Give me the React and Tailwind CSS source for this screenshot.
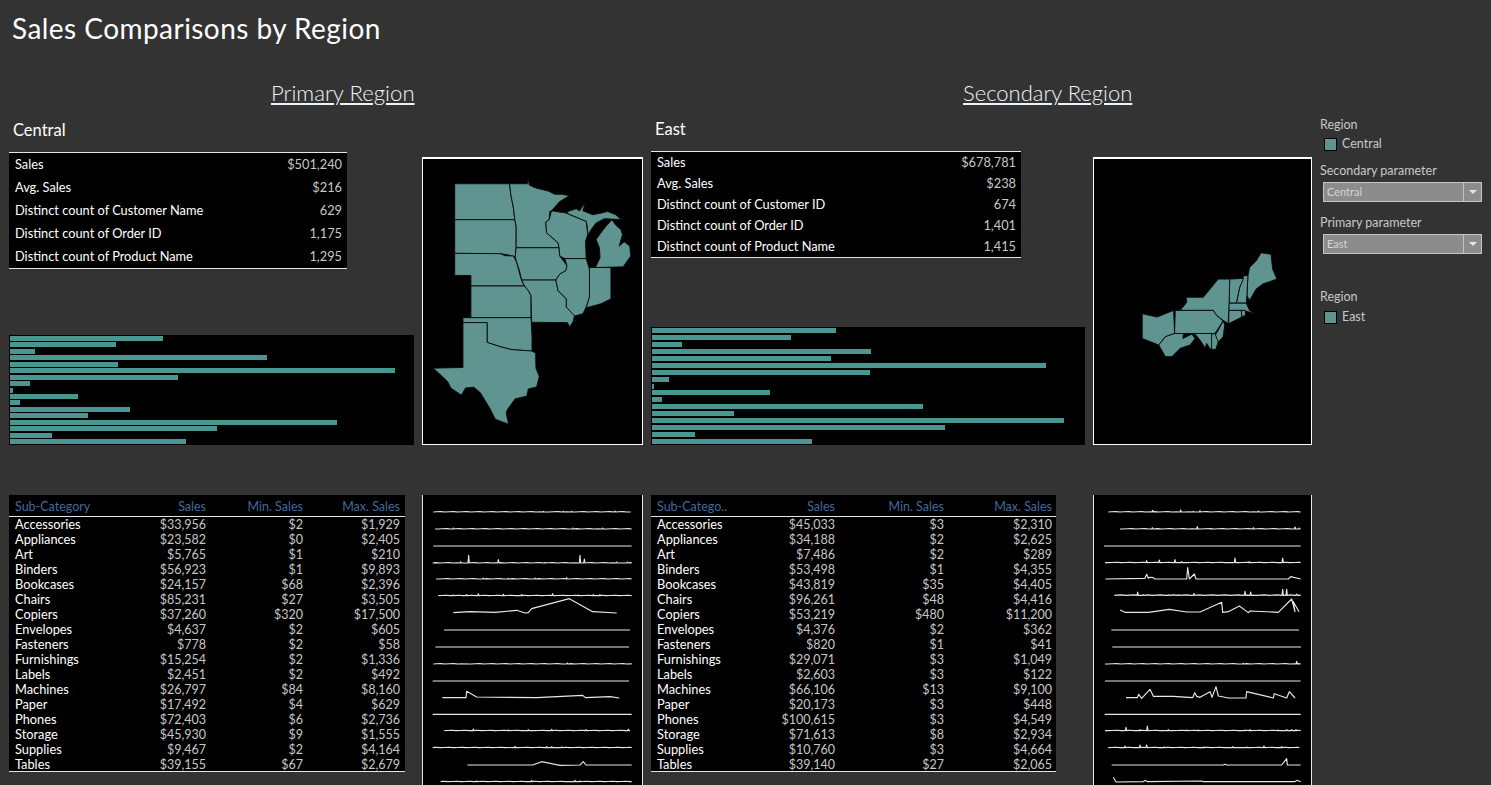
const FONT = "font-['Lato','Liberation_Sans',sans-serif]";

const centralMap = [
  "102,96 268,96 272,130 280,170 284,205 102,205",
  "102,205 284,205 288,225 288,290 285,318 265,312 240,308 102,307",
  "102,307 240,308 255,314 280,315 290,335 300,375 305,390 313,406 151,406 151,374 102,374",
  "151,406 313,406 325,420 333,435 333,502 151,502",
  "268,96 322,96 324,82 328,100 345,108 360,112 385,118 405,128 425,128 450,132 420,150 395,178 390,180 388,205 378,212 380,245 400,262 415,275 418,290 288,290 288,225 284,205 280,170 272,130",
  "288,290 418,290 420,315 442,345 438,360 420,370 408,388 305,388 298,360 290,335 285,318",
  "305,388 408,388 415,420 440,445 440,470 465,495 460,515 450,530 443,517 335,516 333,435 325,420 313,406",
  "395,178 440,185 500,210 505,250 498,270 500,323 435,323 420,315 418,290 415,275 400,262 380,245 378,212 388,205",
  "435,323 500,323 510,355 510,440 500,470 490,490 465,497 440,470 440,445 415,420 408,388 420,370 438,360 442,345",
  "510,350 575,350 575,445 545,460 500,472 510,440",
  "440,185 450,178 470,172 480,178 497,153 490,178 520,190 545,185 565,180 590,190 600,200 608,205 575,203 555,202 530,215 515,235 505,252 503,225 500,210",
  "578,205 590,222 605,235 610,250 600,285 615,272 632,285 635,315 612,348 528,350 542,320 540,290 530,265 548,240 560,225",
  "127,502 333,502 336,560 336,603 290,600 270,598 240,590 200,577 200,517 127,517",
  "127,517 200,517 200,577 240,590 270,598 290,600 336,603 347,610 348,655 358,680 350,712 325,718 320,740 285,748 262,780 258,790 265,825 225,810 210,780 180,730 160,713 135,715 122,737 90,715 80,695 37,655 127,653",
];

const eastMap = [
  "475,495 480,470 500,450 515,425 545,430 550,475 563,505 520,520 500,535 480,570 472,555",
  "475,495 472,555 470,578 440,578 450,530 462,495",
  "420,505 462,503 450,530 440,578 418,578 418,540",
  "417,578 470,578 480,600 495,610 462,600 417,600",
  "417,600 455,600 457,620 417,640",
  "455,600 467,600 468,615 457,620",
  "420,505 418,578 417,600 415,640 400,630 380,615 370,600 270,600 290,575 288,560 340,560 385,505",
  "255,600 370,600 380,615 400,632 385,655 375,670 253,670",
  "400,632 405,645 400,680 385,695 370,685 385,660",
  "155,610 200,620 250,600 253,670 225,680 205,705 155,685",
  "205,705 225,680 253,670 280,670 278,685 305,672 315,685 300,705 270,715 245,740 225,740",
  "278,670 375,670 375,700 362,718 350,700 345,715 340,705 330,690 315,672",
  "365,672 375,670 385,695 378,718 365,718",
];

const centralBars = [153, 106, 25, 257, 108, 385, 168, 20, 3, 68, 10, 120, 78, 327, 207, 42, 176];
const eastBars = [184, 139, 30, 219, 179, 394, 218, 17, 2, 118, 10, 271, 82, 412, 293, 43, 160];

const centralKpi = [
  ["Sales", "$501,240"],
  ["Avg. Sales", "$216"],
  ["Distinct count of Customer Name", "629"],
  ["Distinct count of Order ID", "1,175"],
  ["Distinct count of Product Name", "1,295"],
];
const eastKpi = [
  ["Sales", "$678,781"],
  ["Avg. Sales", "$238"],
  ["Distinct count of Customer ID", "674"],
  ["Distinct count of Order ID", "1,401"],
  ["Distinct count of Product Name", "1,415"],
];

const centralRows = [
  ["Accessories", "$33,956", "$2", "$1,929"],
  ["Appliances", "$23,582", "$0", "$2,405"],
  ["Art", "$5,765", "$1", "$210"],
  ["Binders", "$56,923", "$1", "$9,893"],
  ["Bookcases", "$24,157", "$68", "$2,396"],
  ["Chairs", "$85,231", "$27", "$3,505"],
  ["Copiers", "$37,260", "$320", "$17,500"],
  ["Envelopes", "$4,637", "$2", "$605"],
  ["Fasteners", "$778", "$2", "$58"],
  ["Furnishings", "$15,254", "$2", "$1,336"],
  ["Labels", "$2,451", "$2", "$492"],
  ["Machines", "$26,797", "$84", "$8,160"],
  ["Paper", "$17,492", "$4", "$629"],
  ["Phones", "$72,403", "$6", "$2,736"],
  ["Storage", "$45,930", "$9", "$1,555"],
  ["Supplies", "$9,467", "$2", "$4,164"],
  ["Tables", "$39,155", "$67", "$2,679"],
];
const eastRows = [
  ["Accessories", "$45,033", "$3", "$2,310"],
  ["Appliances", "$34,188", "$2", "$2,625"],
  ["Art", "$7,486", "$2", "$289"],
  ["Binders", "$53,498", "$1", "$4,355"],
  ["Bookcases", "$43,819", "$35", "$4,405"],
  ["Chairs", "$96,261", "$48", "$4,416"],
  ["Copiers", "$53,219", "$480", "$11,200"],
  ["Envelopes", "$4,376", "$2", "$362"],
  ["Fasteners", "$820", "$1", "$41"],
  ["Furnishings", "$29,071", "$3", "$1,049"],
  ["Labels", "$2,603", "$3", "$122"],
  ["Machines", "$66,106", "$13", "$9,100"],
  ["Paper", "$20,173", "$3", "$448"],
  ["Phones", "$100,615", "$3", "$4,549"],
  ["Storage", "$71,613", "$8", "$2,934"],
  ["Supplies", "$10,760", "$3", "$4,664"],
  ["Tables", "$39,140", "$27", "$2,065"],
];

// flat lines with spikes: [y, x1, x2, [[x, height], ...]], or a plain points string
const centralSpark = [
  [66, 40, 632, [[370, 2], [430, 2], [455, 2], [585, 3]]],
  [117, 45, 635, [[100, 3], [458, 3], [548, 3]]],
  [168, 40, 635, []],
  [219, 38, 635, [[122, 4], [146, 23], [235, 10], [375, 2], [480, 23], [493, 12], [590, 3], [622, 3]]],
  [267, 48, 635, [[190, 3], [265, 2], [345, 3], [440, 4]]],
  [317, 55, 635, [[100, 2], [140, 3], [175, 6], [250, 4], [305, 3], [398, 6], [475, 2], [520, 3], [540, 3]]],
  "100,368 150,365 225,367 290,361 315,369 325,368 335,356 448,326 518,365 590,369",
  [420, 72, 630, []],
  [471, 46, 627, []],
  [522, 40, 635, [[138, 1], [442, 3]]],
  [573, 38, 627, []],
  "67,623 138,623 140,604 170,621 350,623 488,616 497,623 570,620 598,624",
  [673, 38, 635, []],
  [722, 73, 630, [[160, 5], [265, 2], [325, 3], [395, 4], [498, 3], [625, 4]]],
  [773, 38, 635, [[285, 4], [380, 3], [395, 3], [425, 2]]],
  "142,825 338,825 365,815 420,826 480,825 490,815 498,825 635,825",
  [875, 62, 635, [[170, 2], [335, 3], [465, 4], [480, 2]]],
];
const eastSpark = [
  [66, 55, 632, [[188, 5], [272, 6], [310, 2], [330, 4], [505, 3], [590, 2]]],
  [117, 90, 632, [[187, 4], [322, 7], [365, 2], [490, 4], [615, 6], [628, 3]]],
  [168, 42, 632, []],
  [218, 45, 632, [[170, 6], [208, 8], [255, 9], [275, 3], [435, 14], [478, 3], [578, 14]]],
  "46,267 165,265 170,253 175,265 180,262 190,263 195,267 290,267 293,233 298,267 313,252 318,267 595,267 602,260 632,267",
  [316, 73, 632, [[143, 10], [160, 2], [235, 2], [265, 2], [312, 6], [465, 12], [482, 10], [578, 18], [590, 18], [620, 4]]],
  "90,360 105,367 175,367 238,358 290,366 330,366 395,337 398,367 415,365 448,348 475,368 480,363 565,367 605,327 615,365 610,335 627,365",
  [420, 64, 627, []],
  [471, 67, 633, []],
  [522, 45, 632, [[460, 2], [620, 8]]],
  [573, 45, 632, []],
  "108,623 142,623 146,613 155,625 180,598 190,619 250,619 308,623 314,608 320,619 330,622 360,605 366,622 378,590 385,618 415,624 468,624 470,605 550,624 553,611 590,624 598,605 615,624",
  [673, 44, 632, []],
  [722, 45, 632, [[108, 10], [150, 3], [172, 14], [235, 3], [290, 2], [325, 2], [465, 2], [480, 3], [565, 2], [590, 3], [605, 3], [618, 3]]],
  [773, 55, 628, [[105, 5], [150, 8], [170, 8], [222, 2], [342, 2], [428, 3], [470, 2], [522, 5], [575, 3]]],
  "65,825 400,825 405,823 410,825 575,825 590,806 592,825 632,825",
  "70,862 78,876 160,875 165,871 172,875 335,873 340,875 615,875 620,871 632,875",
];

const sparkPoints = (row) => {
  if (typeof row === "string") return row;
  const [y, x1, x2, spikes] = row;
  const pts = [[x1, y]];
  spikes.forEach(([x, h]) => pts.push([x - 2, y], [x, y - h], [x + 2, y]));
  // small wobble on the busy lines
  if (spikes.length > 1) {
    for (let x = x1 + 9; x < x2; x += 13) {
      if (!spikes.some(([sx]) => Math.abs(sx - x) < 5)) pts.push([x, y - ((x * 7) % 3) * 0.6]);
    }
  }
  pts.push([x2, y]);
  return pts.sort((a, b) => a[0] - b[0]).map((p) => p.join(",")).join(" ");
};

const KpiTable = ({ rows, rowClass, className }) => (
  <div className={`bg-black border-y border-[#e6e6e6] flex flex-col pl-[6px] pr-[5px] text-[12.8px] ${className}`}>
    {rows.map(([name, value]) => (
      <div key={name} className={`flex items-center justify-between ${rowClass}`}>
        <span className="text-white">{name}</span>
        <span className="text-[#c8c8c8]">{value}</span>
      </div>
    ))}
  </div>
);

const Bars = ({ values, className }) => (
  <div className={`bg-black flex flex-col justify-between py-px pl-px ${className}`}>
    {values.map((w, i) => (
      <div key={i} className="h-[5px] bg-[#4a9690]" style={{ width: w }} />
    ))}
  </div>
);

const SubTable = ({ first, rows, cols, className }) => (
  <div className={`bg-black border-b border-[#e6e6e6] h-[277px] text-[12.5px] ${className}`}>
    <div className={`grid ${cols} h-[22px] pt-[3px] items-center pl-[6px] border-b border-[#e6e6e6] text-[#40699c] whitespace-nowrap`}>
      <span>{first}</span>
      <span className="text-right">Sales</span>
      <span className="text-right">Min. Sales</span>
      <span className="text-right">Max. Sales</span>
    </div>
    {rows.map((r) => (
      <div key={r[0]} className={`grid ${cols} h-[15px] items-center pl-[6px] leading-[15px] text-[#c8c8c8]`}>
        <span className="text-white text-[12.8px]">{r[0]}</span>
        <span className="text-right">{r[1]}</span>
        <span className="text-right">{r[2]}</span>
        <span className="text-right">{r[3]}</span>
      </div>
    ))}
  </div>
);

const MapBox = ({ states, viewBox }) => (
  <div className="mt-[37px] h-[288px] bg-black border border-t-2 border-white">
    <svg viewBox={viewBox} preserveAspectRatio="none" className="block w-full h-full">
      {states.map((s, i) => (
        <polygon key={i} points={s} fill="#5f9490" stroke="#0a0a0a" strokeWidth="2.8" strokeLinejoin="round" />
      ))}
    </svg>
  </div>
);

const Spark = ({ rows, viewBox }) => (
  <div className="mt-[50px] h-[290px] bg-black border-x border-[#e6e6e6]">
    <svg viewBox={viewBox} preserveAspectRatio="none" className="block w-full h-full">
      {rows.map((r, i) => (
        <polyline key={i} points={sparkPoints(r)} fill="none" stroke="#e8e8e8" strokeWidth="3.4" strokeLinejoin="round" />
      ))}
    </svg>
  </div>
);

const Legend = ({ label }) => (
  <div className="flex items-center h-[14px] pl-[4px] gap-[5px] text-[12.5px] text-[#c8c8c8]">
    <span className="w-[13px] h-[13px] bg-[#5f9490] border border-black" />
    <span>{label}</span>
  </div>
);

const Select = ({ value }) => (
  <div className="flex h-[20px] w-[159px] ml-[3px] bg-[#8c8c8c] border border-[#c4c4c4] text-[11px] text-[#d4d4d4]">
    <span className="flex-1 pl-[3px] leading-[18px]">{value}</span>
    <span className="w-[18px] border-l border-[#c4c4c4] flex items-center justify-center">
      <span className="w-0 h-0 border-x-[4px] border-x-transparent border-t-[4px] border-t-[#e6e6e6]" />
    </span>
  </div>
);

const App = () => {
  return (
    <div className={`${FONT} bg-[#333333] w-[1491px] h-[785px] overflow-hidden`}>
      <h1 className="h-[80px] pl-[12px] pt-[12px] text-[28px] tracking-[0.45px] leading-[32px] text-white">Sales Comparisons by Region</h1>

      <div className="flex">
        {/* primary */}
        <div className="ml-[9px] w-[634px]">
          <div className="h-[26px] pl-[262px] text-[22.2px] leading-[26px] font-light text-[#eef4f8] underline underline-offset-2">Primary Region</div>
          <div className="flex gap-[8px] mt-[14px]">
            <div className="w-[405px]">
              <div className="h-[20px] pl-[4px] text-[16.5px] leading-[20px] text-white">Central</div>
              <KpiTable rows={centralKpi} rowClass="h-[23px]" className="mt-[12px] w-[338px] h-[117px]" />
              <Bars values={centralBars} className="mt-[66px] h-[110px]" />
              <SubTable first="Sub-Category" rows={centralRows} cols="grid-cols-[94px_97px_97px_97px]" className="mt-[50px] w-[396px]" />
            </div>
            <div className="w-[221px]">
              <MapBox states={centralMap} viewBox="6 21 663 864" />
              <Spark rows={centralSpark} viewBox="9 15 657 870" />
            </div>
          </div>
        </div>

        {/* secondary */}
        <div className="ml-[8px] w-[661px]">
          <div className="h-[26px] pl-[312px] text-[22px] leading-[26px] font-light text-[#eef4f8] underline underline-offset-2">Secondary Region</div>
          <div className="flex gap-[8px] mt-[14px]">
            <div className="w-[434px]">
              <div className="h-[19px] pl-[4px] text-[16.5px] leading-[19px] text-white">East</div>
              <KpiTable rows={eastKpi} rowClass="h-[21px]" className="mt-[12px] w-[370px] h-[107px]" />
              <Bars values={eastBars} className="mt-[69px] h-[118px]" />
              <SubTable first="Sub-Catego.." rows={eastRows} cols="grid-cols-[70px_108px_109px_108px]" className="mt-[50px] w-[405px]" />
            </div>
            <div className="w-[219px]">
              <MapBox states={eastMap} viewBox="9 141 657 864" />
              <Spark rows={eastSpark} viewBox="12 15 651 870" />
            </div>
          </div>
        </div>

        {/* filters */}
        <div className="ml-[8px] w-[162px] pt-[37px] text-[12.5px] text-[#c8c8c8]">
          <div className="h-[16px] leading-[16px]">Region</div>
          <div className="mt-[4px]"><Legend label="Central" /></div>
          <div className="mt-[12px] h-[16px] leading-[16px]">Secondary parameter</div>
          <div className="mt-[3px]"><Select value="Central" /></div>
          <div className="mt-[13px] h-[16px] leading-[16px]">Primary parameter</div>
          <div className="mt-[3px]"><Select value="East" /></div>
          <div className="mt-[35px] h-[16px] leading-[16px]">Region</div>
          <div className="mt-[5px]"><Legend label="East" /></div>
        </div>
      </div>
    </div>
  );
};

export default App;
